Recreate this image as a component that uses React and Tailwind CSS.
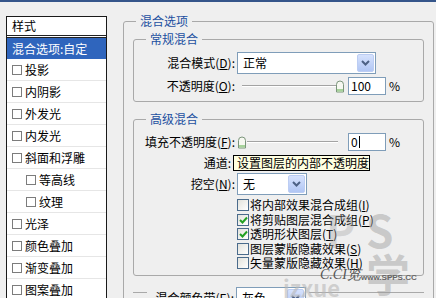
import React from 'react';

function Mn({ children }) {
  return <span className="underline underline-offset-[1px]">{children}</span>;
}

function Chevron() {
  return (
    <svg width="9" height="6" viewBox="0 0 9 6">
      <path d="M1 1 L4.5 4.5 L8 1" fill="none" stroke="#4d6185" strokeWidth="2" />
    </svg>
  );
}

function Select({ value, width }) {
  return (
    <div className={`flex h-[22px] items-center border border-[#7f9db9] bg-white pl-[5px] pr-px ${width}`}>
      <span className="flex-1 text-[12px] leading-[14px]">{value}</span>
      <span className="flex h-[18px] w-[17px] items-center justify-center rounded-[2px] border border-[#bccdf3] bg-gradient-to-b from-[#d6e2fd] to-[#b1c6f4]">
        <Chevron />
      </span>
    </div>
  );
}

function Thumb() {
  return (
    <svg width="10" height="13" viewBox="0 0 10 13" className="shrink-0">
      <path d="M1.5 12 V4.5 Q1.5 1 5 1 Q8.5 1 8.5 4.5 V12 Z" fill="#f6f8f1" stroke="#7b957b" />
      <rect x="2" y="9" width="6" height="2.5" fill="#a6d39a" />
    </svg>
  );
}

function Track({ width }) {
  return <div className={`h-[2px] border-t border-[#a3a3a3] bg-white ${width}`} />;
}

function Box({ checked }) {
  return (
    <span className="flex h-[12px] w-[12px] shrink-0 items-center justify-center border border-[#4a6b8c] bg-gradient-to-br from-[#e2e2dc] to-white">
      {checked && (
        <svg width="9" height="8" viewBox="0 0 9 8">
          <path d="M1 4 L3.5 6.5 L8 1.5" fill="none" stroke="#22a022" strokeWidth="2" />
        </svg>
      )}
    </span>
  );
}

function StyleRow({ label, indent }) {
  return (
    <div className={`flex h-[22px] items-center border-b border-[#e6e6e6] ${indent ? 'pl-[19px]' : 'pl-[5px]'}`}>
      <span className="h-[10px] w-[10px] border border-[#7c7c7c] bg-white" />
      <span className="ml-[3px] text-[12px] leading-[14px]">{label}</span>
    </div>
  );
}

const styleRows = [
  ['投影'], ['内阴影'], ['外发光'], ['内发光'], ['斜面和浮雕'],
  ['等高线', true], ['纹理', true], ['光泽'], ['颜色叠加'], ['渐变叠加'], ['图案叠加'],
];

const advChecks = [
  ['将内部效果混合成组', 'I', false],
  ['将剪贴图层混合成组', 'P', true],
  ['透明形状图层', 'T', true],
  ['图层蒙版隐藏效果', 'S', false],
  ['矢量蒙版隐藏效果', 'H', false],
];

export default function App() {
  return (
    <div className="relative h-[298px] w-[436px] overflow-hidden border-t-2 border-[#35558a] bg-[#efefef] font-['Noto_Sans_CJK_SC',sans-serif] text-black">
      <div className="flex items-start">
        <div className="ml-[6px] mt-[14px] w-[101px] shrink-0 border border-[#1a1a1a] bg-white">
          <div className="flex h-[21px] items-center border-b-[3px] border-double border-[#222] pl-[5px] text-[12px] leading-[14px]">样式</div>
          <div className="flex h-[21px] items-center bg-[#2f65bd] pl-[5px] text-[12px] leading-[14px] text-white">混合选项:自定</div>
          {styleRows.map(([l, ind]) => (
            <StyleRow key={l} label={l} indent={ind} />
          ))}
        </div>

        <fieldset className="ml-[16px] mt-[12px] w-[311px] shrink-0 rounded-[3px] border border-[#a9a9a9]">
          <legend className="ml-[12px] px-[4px] text-[12px] leading-[14px] text-[#1c4fa0]">混合选项</legend>

          <fieldset className="mx-[9px] mt-[4px] rounded-[3px] border border-[#a9a9a9] pb-[6px] pt-[6px]">
            <legend className="ml-[12px] px-[4px] text-[12px] leading-[14px] text-[#1c4fa0]">常规混合</legend>
            <div className="flex h-[22px] items-center">
              <span className="w-[101px] text-right text-[12px] leading-[14px]">混合模式(<Mn>D</Mn>):</span>
              <div className="ml-[2px]"><Select value="正常" width="w-[139px]" /></div>
            </div>
            <div className="mt-[3px] flex h-[18px] items-center">
              <span className="w-[101px] text-right text-[12px] leading-[14px]">不透明度(<Mn>O</Mn>):</span>
              <div className="ml-[7px] flex items-center">
                <Track width="w-[94px]" />
                <div className="-ml-px"><Thumb /></div>
              </div>
              <div className="ml-[3px] flex h-[18px] w-[38px] items-center border border-[#7f9db9] bg-white pl-[2px] text-[12px] leading-[14px]">100</div>
              <span className="ml-[3px] text-[12px] leading-[14px]">%</span>
            </div>
          </fieldset>

          <fieldset className="mx-[9px] mt-[10px] rounded-[3px] border border-[#a9a9a9] pb-[4px] pt-[7px]">
            <legend className="ml-[12px] px-[4px] text-[12px] leading-[14px] text-[#1c4fa0]">高级混合</legend>
            <div className="flex h-[18px] items-center">
              <span className="w-[101px] text-right text-[12px] leading-[14px]">填充不透明度(<Mn>F</Mn>):</span>
              <div className="ml-[2px] flex items-center">
                <Thumb />
                <Track width="w-[91px]" />
              </div>
              <div className="ml-[10px] flex h-[18px] w-[38px] items-center border border-[#7f9db9] bg-white pl-[2px] text-[12px] leading-[14px]">
                0<span className="ml-px h-[12px] w-px bg-black" />
              </div>
              <span className="ml-[3px] text-[12px] leading-[14px]">%</span>
            </div>
            <div className="mt-[4px] flex h-[16px] items-center">
              <span className="w-[101px] pr-[4px] text-right text-[12px] leading-[14px]">通道:</span>
              <div className="ml-[21px] flex items-center gap-[20px] text-[12px] leading-[14px]">
                <span className="flex items-center gap-[2px]"><Box checked />R</span>
                <span className="flex items-center gap-[2px]"><Box checked />G</span>
                <span className="flex items-center gap-[2px]"><Box checked />B</span>
              </div>
            </div>
            <div className="mt-[2px] flex h-[22px] items-center">
              <span className="w-[101px] text-right text-[12px] leading-[14px]">挖空(<Mn>N</Mn>):</span>
              <div className="ml-[2px]"><Select value="无" width="w-[70px]" /></div>
            </div>
            <div className="mt-[3px] pl-[103px]">
              {advChecks.map(([t, k, c]) => (
                <div key={t} className="flex h-[14.5px] items-center">
                  <Box checked={c} />
                  <span className="ml-px text-[12px] leading-[14px]">{t}(<Mn>{k}</Mn>)</span>
                </div>
              ))}
            </div>
          </fieldset>

          <div className="mx-[9px] mt-[16px] border-t border-[#a9a9a9]">
            <div className="-mt-[6px] ml-[14px] flex w-fit items-center bg-[#efefef] px-[3px]">
              <span className="w-[84px] text-right text-[12px] leading-[14px]">混合颜色带(<Mn>E</Mn>):</span>
              <div className="ml-[2px]"><Select value="灰色" width="w-[70px]" /></div>
            </div>
          </div>
          <div className="h-[40px]" />
        </fieldset>
      </div>

      <div className="absolute left-[233px] top-[153px] flex h-[16px] w-[137px] items-center border border-black bg-[#ffffe1] pl-[3px] text-[12px] leading-[14px]">
        设置图层的内部不透明度
      </div>

      <div className="pointer-events-none absolute left-[326px] top-[205px] text-[44px] font-bold leading-none text-[#a0a0a0]/35">P</div>
      <div className="pointer-events-none absolute left-[366px] top-[205px] text-[44px] font-bold leading-none text-[#9a9a9a]/45">S学</div>
      <div className="pointer-events-none absolute left-[283px] top-[274px] text-[22px] font-bold leading-none text-[#b8b8b8]/60">jzxue</div>
      <div className="pointer-events-none absolute left-[320px] top-[266px] font-['Liberation_Serif',serif] text-[14px] italic leading-none text-[#555]">C.CI览</div>
      <div className="pointer-events-none absolute left-[361px] top-[272px] font-['Liberation_Sans',sans-serif] text-[8px] font-bold leading-none text-[#666]">www.SPPS.CC</div>
    </div>
  );
}
